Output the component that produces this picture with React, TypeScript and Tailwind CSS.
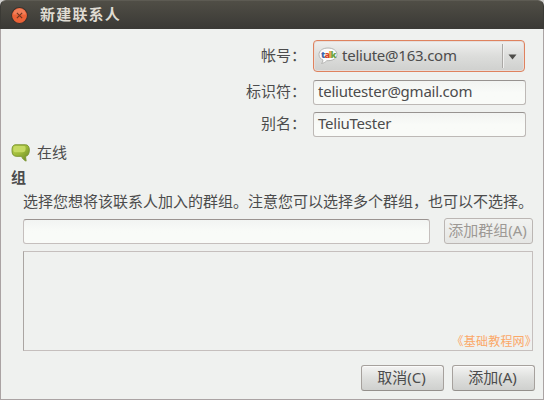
import type { ReactNode } from "react";

function TalkIcon() {
  return (
    <svg width="20" height="18" viewBox="0 0 20 18" className="mb-px shrink-0">
      <path d="M10 1C4.600 1 1 3.800 1 7.500c0 2.600 1.600 4.600 4 5.600-.1 1.500-.8 2.600-1.500 3.400 2.500-.5 4.200-1.500 5.300-2.800 5.900.3 10.200-2.200 10.200-6.200C19 3.800 15.400 1 10 1Z" fill="#fcfcfc" stroke="#b5b5b3" strokeWidth="1" />
      <g fontFamily="Open Sans, sans-serif" fontWeight="800" fontSize="9">
        <text x="3" y="11" fill="#3b67ae">t</text>
        <text x="6.500" y="11" fill="#d8432f">a</text>
        <text x="10.800" y="11" fill="#e6a23a">l</text>
        <text x="12.600" y="11" fill="#6ba33e">k</text>
      </g>
    </svg>
  );
}

function ChatIcon() {
  return (
    <svg width="20" height="18" viewBox="0 0 20 18" className="shrink-0">
      <defs>
        <linearGradient id="bubble" x1="0" y1="0" x2="1" y2="1">
          <stop offset="0" stopColor="#b6cd4c" />
          <stop offset=".5" stopColor="#9cb938" />
          <stop offset="1" stopColor="#668523" />
        </linearGradient>
      </defs>
      <path d="M5 .8h9.500c2.500 0 3.800 2 3.800 5.200 0 3.800-1.300 6-3.800 6.300l.6 4.800c-2-.8-3.700-2.500-4.600-4.800H6C2.500 12.300 1 10.500 1 6.700 1 2.600 2 .8 5 .8Z" fill="url(#bubble)" stroke="#7c9632" strokeWidth="1" />
      <path d="M5 2h8c1.300 0 1.800 1 1.600 3-.2 2.300-1 3.300-3 3.300H5C3 8.300 2.300 7.600 2.300 5.500 2.300 3 3 2 5 2Z" fill="#c5da62" />
    </svg>
  );
}

function Field({ label, children }: { label: string; children: ReactNode }) {
  return (
    <div className="flex items-center justify-end">
      <span className="mr-[7px] whitespace-nowrap pb-[3px] leading-[20px]">{label}</span>
      {children}
    </div>
  );
}

function Entry({ value }: { value: string }) {
  return (
    <div className="h-[25px] w-[213px] rounded-[3px] border border-[#bdb9b6] border-t-[#979390] bg-linear-to-b from-[#f2f4f2] to-[#f9fbf8] to-50% pl-[4px] leading-[21px] tracking-[-0.240px]">
      {value}
    </div>
  );
}

function Button({ children, className }: { children: ReactNode; className: string }) {
  return (
    <button className={`flex h-[26px] items-center justify-center whitespace-nowrap rounded-[3px] border pb-[2px] pr-[2px] leading-[20px] ${className}`}>
      {children}
    </button>
  );
}

const push = "border-[#a6a19d] border-b-[#94908c] bg-linear-to-b from-[#f4f4f3] via-[#dedfdd] to-[#cfd0ce] w-[83px] shadow-[inset_0_1px_0_#fbfbfa]";

export default function App() {
  return (
    <div className="flex h-[400px] w-[544px] flex-col overflow-hidden bg-[#d0cfcd] font-['Noto_Sans','Noto_Sans_CJK_SC',sans-serif] text-[15px] text-[#4c4c4c]">
      <header className="flex h-[29px] shrink-0 items-center rounded-t-[6px] border border-b-0 border-[#3b3a35] border-t-[#5d5b53] bg-linear-to-b from-[#504e46] to-[#3a3935] pl-[10px]">
        <svg width="17" height="17" viewBox="0 0 16 16">
          <circle cx="8" cy="8" r="7.500" fill="#ec6237" stroke="#36332f" />
          <path d="M2 7a6 5.500 0 0 1 12 0Z" fill="#f27e58" />
          <path d="m5.500 5.500 5 5m0-5-5 5" stroke="#713620" strokeWidth="1.100" />
        </svg>
        <h1 className="ml-[12px] pb-[3px] font-['Noto_Sans_CJK_SC',sans-serif] text-[15px] font-bold leading-[22px] tracking-[1.200px] text-[#dfdbd2]">新建联系人</h1>
      </header>
      <main className="flex min-h-0 grow flex-col border border-t-0 border-[#aaa3a3] bg-[#eff1ef]">
        <section className="mr-[17px] mt-[11px] flex flex-col">
          <Field label="帐号：">
            <div className="mr-px flex h-[32px] w-[212px] items-center rounded-[4px] border border-[#df825e] bg-linear-to-b from-[#f0f0ef] via-[#dcdddb] to-[#cfd0ce] pl-[4px] shadow-[inset_0_0_0_1px_#e5dedb]">
              <TalkIcon />
              <span className="ml-[4px] grow pb-[2px] leading-[20px] tracking-[-0.240px]">teliute@163.com</span>
              <span className="flex h-[24px] w-[22px] items-center border-l border-[#aaa8a5] pl-[5px] shadow-[inset_1px_0_0_#f0f0ef]">
                <svg width="10" height="6" viewBox="0 0 10 6" className="mt-[2px]"><path d="M.5.500h8L4.500 5.500Z" fill="#4d4c49" /></svg>
              </span>
            </div>
          </Field>
          <div className="mt-[8px]"><Field label="标识符："><Entry value="teliutester@gmail.com" /></Field></div>
          <div className="mt-[7px]"><Field label="别名："><Entry value="TeliuTester" /></Field></div>
        </section>
        <div className="ml-[10px] mt-[4px] flex h-[24px] items-center">
          <ChatIcon />
          <span className="ml-[6px] pb-[2px] leading-[20px]">在线</span>
        </div>
        <h2 className="ml-[10px] h-[24px] text-[15px] font-bold leading-[24px]">组</h2>
        <p className="ml-[22px] h-[25px] whitespace-nowrap leading-[25px]">选择您想将该联系人加入的群组。注意您可以选择多个群组，也可以不选择。</p>
        <div className="ml-[22px] mr-[10px] mt-[4px] flex items-center justify-between">
          <div className="h-[25px] w-[407px] rounded-[3px] border border-[#c5bfbd] border-t-[#9a9390] bg-linear-to-b from-[#f2f4f2] to-[#f9fbf8] to-50%" />
          <Button className="w-[89px] border-[#bbb6b3] bg-linear-to-b from-[#f1f2f0] to-[#e5e6e4] text-[#9d9995]">添加群组(A)</Button>
        </div>
        <div className="ml-[22px] mr-[10px] mt-[7px] flex h-[100px] shrink-0 items-end justify-end border border-[#c5bfbd] border-l-[#aaa5a2]">
          <span className="-mr-[5px] whitespace-nowrap font-['Noto_Sans_CJK_SC',sans-serif] text-[12px] leading-[19px] tracking-[0.200px] text-[#fba868]">《基础教程网》</span>
        </div>
        <footer className="mr-[8px] mt-[14px] flex justify-end gap-[8px]">
          <Button className={push}>取消(C)</Button>
          <Button className={push}>添加(A)</Button>
        </footer>
      </main>
    </div>
  );
}
